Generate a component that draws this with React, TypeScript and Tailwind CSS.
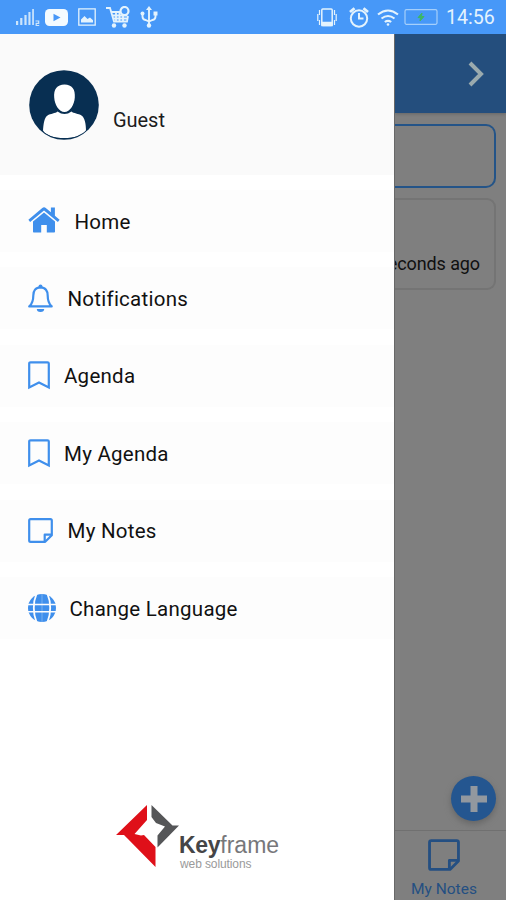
import type { ReactNode } from "react";

function HomeIcon() {
  return (
    <svg className="mb-[3px]" width="32" height="27" viewBox="0 0 32 27" fill="#3f8fec">
      <path d="M16 6.4 27 15.6V25.5c0 .6-.4 1-1 1h-7.2v-7.6h-5.6v7.6H6c-.6 0-1-.4-1-1v-9.9z" />
      <path d="M22.9 1.500h4v8.300l4.700 4-1.700 2.300L16 4.600 2.100 16.100.4 13.800 14.300 2c1-.9 2.500-.9 3.500 0l5.100 4.300z" />
    </svg>
  );
}

function BellIcon() {
  return (
    <svg width="25" height="29" viewBox="0 0 25 29" fill="none" stroke="#3f8fec" strokeWidth="2.2">
      <path d="M12.5 3.3c-5 0-7.2 3.8-7.2 8.1 0 5.6-1.3 8.5-4 11h22.4c-2.7-2.5-4-5.4-4-11 0-4.3-2.2-8.1-7.2-8.1Z" strokeLinejoin="round" />
      <circle cx="12.5" cy="2.4" r="2" fill="#3f8fec" stroke="none" />
      <path d="M8.8 25h7.4a3.7 3 0 0 1-7.4 0Z" fill="#3f8fec" stroke="none" />
    </svg>
  );
}

function BookmarkIcon() {
  return (
    <svg width="22" height="29" viewBox="0 0 22 29" fill="none" stroke="#3f8fec" strokeWidth="2.2">
      <path d="M1.2 2.6c0-.8.5-1.3 1.3-1.3h17c.8 0 1.3.5 1.3 1.3v23.8L11 21.5l-9.8 4.900Z" />
    </svg>
  );
}

function NoteIcon({ size = 25, color = "#3f8fec" }: { size?: number; color?: string }) {
  return (
    <svg width={size} height={size} viewBox="0 0 25 25" fill="none" stroke={color} strokeWidth="2.2" strokeLinejoin="round">
      <path d="M2.6 1.2h19.8c.8 0 1.4.6 1.4 1.4v14.6l-6.6 6.6H2.6c-.8 0-1.4-.6-1.4-1.4V2.6c0-.8.6-1.4 1.4-1.4Z" />
      <path d="M16.7 23.6v-6.9h7" />
    </svg>
  );
}

function GlobeIcon() {
  return (
    <svg width="28" height="28" viewBox="0 0 28 28" fill="none">
      <circle cx="14" cy="14" r="14" fill="#3f8fec" />
      <path d="M0 10.500h28M0 17.800h28" stroke="#fdfdfd" strokeWidth="1.5" />
      <path d="M8.500 0C4.900 8 4.900 20 8.500 28M19.500 0c3.600 8 3.600 20 0 28" stroke="#fdfdfd" strokeWidth="1.800" />
      <path d="M14 0v28" stroke="#fdfdfd" strokeWidth=".3" />
    </svg>
  );
}

const menu: { label: string; icon: ReactNode; gap: string }[] = [
  { label: "Home", icon: <HomeIcon />, gap: "gap-[14.500px]" },
  { label: "Notifications", icon: <BellIcon />, gap: "gap-[14.500px]" },
  { label: "Agenda", icon: <BookmarkIcon />, gap: "gap-[14px]" },
  { label: "My Agenda", icon: <BookmarkIcon />, gap: "gap-[14px]" },
  { label: "My Notes", icon: <NoteIcon />, gap: "gap-[14.500px]" },
  { label: "Change Language", icon: <GlobeIcon />, gap: "gap-[13.500px]" },
];

function StatusBar() {
  return (
    <header className="flex h-[34px] shrink-0 items-center bg-[#4798f8] pr-[10px] pl-4 text-[#e4f3fd]">
      <svg width="24" height="20" viewBox="0 0 24 20" fill="currentColor" opacity=".85">
        <path d="M0 14h2.2v4H0zM4.200 11h2.2v7H4.200zM8.400 8h2.200v10H8.400zM12.400 5h2.100v13h-2.100zM16.200 2h1.700v16h-1.700z" />
        <path d="M19.500 14h3.200v2.300h-2.500v2.200h3" fill="none" stroke="currentColor" strokeWidth="1.200" />
      </svg>
      <svg className="ml-[5px]" width="23" height="17" viewBox="0 0 23 17">
        <rect width="23" height="17" rx="4.500" fill="#f4fbff" />
        <path d="m8.500 4.700 7 3.800-7 3.800z" fill="#4798f8" />
      </svg>
      <svg className="ml-[10px]" width="18" height="18" viewBox="0 0 18 18" fill="none" stroke="currentColor" strokeWidth="1.300">
        <path d="M.8.800h16.400v16.400H.8z" />
        <path d="M3 14.500v-3l3.500-3.500 3 3 2.500-1.500 3 2.800v2.200Z" fill="currentColor" stroke="none" />
      </svg>
      <svg className="ml-[10px]" width="25" height="22" viewBox="0 0 25 22" fill="none" stroke="currentColor" strokeWidth="1.800">
        <path d="M0 2h4l4 13.500h13L22 10M5.500 6H15M6.500 9.500h15M7 12.500h14M10 6v9M13.500 6v9M17 9v6" />
        <circle cx="18.500" cy="5" r="4" strokeWidth="2.200" />
        <circle cx="8" cy="19.500" r="2.200" fill="currentColor" stroke="none" />
        <circle cx="18.500" cy="19.500" r="2.200" fill="currentColor" stroke="none" />
      </svg>
      <svg className="ml-[9px]" width="18" height="22" viewBox="0 0 18 22" fill="none" stroke="currentColor" strokeWidth="1.900">
        <path d="M9 3v16M2.500 8v2.500q0 3 3 3.500l3.500 1.500 3.500-1.500q3-.5 3-3.500V7" />
        <path d="M9 0l3 4H6z" fill="currentColor" stroke="none" />
        <circle cx="9" cy="19.500" r="2.200" fill="currentColor" stroke="none" />
        <circle cx="2.500" cy="7.500" r="2" fill="currentColor" stroke="none" />
        <path d="M13.500 5.500h4v4h-4z" fill="currentColor" stroke="none" />
      </svg>

      <svg className="ml-auto" width="20" height="19" viewBox="0 0 20 19" fill="none" stroke="currentColor" strokeWidth="1.500">
        <rect x="4.800" y="1" width="10.400" height="16.500" rx="1" />
        <path d="M5 14.500h10v3H5z" fill="currentColor" />
        <path d="M2.500 2v5M.8 6v7M2.500 12v5M17.500 2v5M19.200 6v7M17.500 12v5" strokeWidth="1.200" />
      </svg>
      <svg className="ml-3" width="20" height="21" viewBox="0 0 20 21" fill="none" stroke="currentColor" strokeWidth="2">
        <circle cx="10" cy="11.500" r="8.200" />
        <path d="M10 6v5.500h4.500" />
        <path d="M1 5l4.500-3.800M19 5l-4.500-3.800" strokeWidth="2.800" />
      </svg>
      <svg className="ml-2" width="22" height="17" viewBox="0 0 22 17" fill="none" stroke="currentColor" strokeWidth="2.100">
        <path d="M1 5.500q10-8 20 0M4.500 9.500q6.500-5 13 0M7.800 13q3.200-2.400 6.400 0" />
        <circle cx="11" cy="15.500" r="1.300" fill="currentColor" stroke="none" />
      </svg>
      <svg className="ml-[5px]" width="34" height="16" viewBox="0 0 34 16" fill="none">
        <path d="M2.500.7h29a1.500 1.500 0 0 1 1.500 1.500v11.600a1.500 1.500 0 0 1-1.500 1.500h-29A1.500 1.500 0 0 1 1 13.800V2.200A1.500 1.500 0 0 1 2.500.7Z" stroke="#a5cffb" strokeWidth="1.200" />
        <path d="m18 4-4 4.600h2.500L16 12l4-4.500h-2.500z" fill="#3cb765" stroke="#3cb765" />
      </svg>
      <span className="ml-[8px] w-[50px] pt-0.5 text-[19.600px] leading-none whitespace-nowrap">14:56</span>
    </header>
  );
}

function Logo() {
  return (
    <div className="mt-auto mb-[30px] ml-[116px] flex">
      <svg className="shrink-0" width="63" height="62" viewBox="0 0 63 62">
        <path d="M31 0v15L18.500 29l6.500 1.500 3-.5 11.500 12V62L11.500 33.500 8 30H0z" fill="#df1019" />
        <path d="M35.500 0 56.500 20.500H63L41.500 42.500V30.500l7.500-9-9-3.500-4.500-6z" fill="#555658" />
      </svg>
      <div className="pt-[28px] font-['Liberation_Sans',sans-serif]">
        <div className="text-[23px] leading-[25px] whitespace-nowrap text-[#77777a]">
          <b className="tracking-[-0.300px] text-[#454547]">Key</b>frame
        </div>
        <div className="ml-px text-[12px] leading-[12px] tracking-[-0.1px] whitespace-nowrap text-[#9a9a9a]">web solutions</div>
      </div>
    </div>
  );
}

function Drawer() {
  return (
    <aside className="flex w-[394px] shrink-0 flex-col bg-white">
      <div className="flex h-[141px] shrink-0 bg-[#fafafa] pt-[36px] pl-[29px]">
        <svg width="70" height="70" viewBox="0 0 70 70">
          <defs>
            <clipPath id="avatar">
              <circle cx="35" cy="35" r="33.800" />
            </clipPath>
          </defs>
          <circle cx="35" cy="35" r="34.800" fill="#082f52" />
          <g clipPath="url(#avatar)" fill="#fff">
            <path d="M35.500 14.500c7.500 0 11 5 10.300 13-.4 7-4.800 14.500-10.300 14.500S25.600 34.500 25.200 27.500c-.7-8 2.800-13 10.300-13Z" />
            <path d="M28.500 41.500q7 5 14 0c2 2 7 2 10 4 3.500 2.500 4.500 9 4.500 15-6 10-38 10-43 0 .5-6 1-12.500 4.500-15 3-2 8-2 10-4Z" />
          </g>
        </svg>
        <span className="mt-[38px] ml-[14px] text-[20px] leading-6 tracking-[-0.050px] text-[#1c1c1c]">Guest</span>
      </div>
      <nav className="flex flex-col gap-[15.400px] pt-[15px]">
        {menu.map((item) => (
          <a key={item.label} className={`flex h-[62px] items-center bg-[#fdfdfd] pl-7 text-[20.500px] text-[#111] ${item.gap}`}>
            {item.icon}
            <span className="pt-0.5 tracking-[0.25px] whitespace-nowrap">{item.label}</span>
          </a>
        ))}
      </nav>
      <Logo />
    </aside>
  );
}

function DimmedPage() {
  return (
    <main className="flex min-w-0 flex-1 flex-col overflow-hidden border-l border-[#686868] bg-[#7f7f7f]">
      <div className="flex h-[79px] shrink-0 items-center justify-end bg-[#244e7d] pr-[21px] shadow-[0_1px_3px_#666]">
        <svg width="17" height="26" viewBox="0 0 17 26" fill="none" stroke="#9aaaae" strokeWidth="4">
          <path d="m2 2 11 11L2 24" />
        </svg>
      </div>
      <div className="mt-[11px] mr-[10px] h-[64px] shrink-0 rounded-r-[10px] border-2 border-l-0 border-[#245488]" />
      <div className="mt-[10px] mr-[10px] flex h-[92px] shrink-0 items-end justify-end rounded-r-[9px] border-2 border-l-0 border-[#747474] pr-[14px] pb-[12px]">
        <span className="text-[18px] leading-6 tracking-[-0.100px] whitespace-nowrap text-[#101010]">econds ago</span>
      </div>
      <button className="mt-auto mr-[10px] mb-[9px] flex size-[45px] shrink-0 items-center justify-center self-end rounded-full bg-[#245690] shadow-[0_3px_6px_#666]">
        <svg width="26" height="26" viewBox="0 0 26 26" fill="#92989f">
          <path d="M9.500 0h7v9.500H26v7h-9.500V26h-7v-9.500H0v-7h9.500z" />
        </svg>
      </button>
      <footer className="flex h-[70px] shrink-0 flex-col items-start border-t border-[#707070] pt-2 pl-[33px] text-[#244f82]">
        <NoteIcon size={32} color="#244f82" />
        <span className="mt-[8px] ml-[-17px] text-[15.500px] leading-5 whitespace-nowrap">My Notes</span>
      </footer>
    </main>
  );
}

export default function App() {
  return (
    <div className="flex h-[900px] w-[506px] flex-col overflow-hidden font-[Roboto,sans-serif]">
      <StatusBar />
      <div className="flex min-h-0 flex-1">
        <Drawer />
        <DimmedPage />
      </div>
    </div>
  );
}
